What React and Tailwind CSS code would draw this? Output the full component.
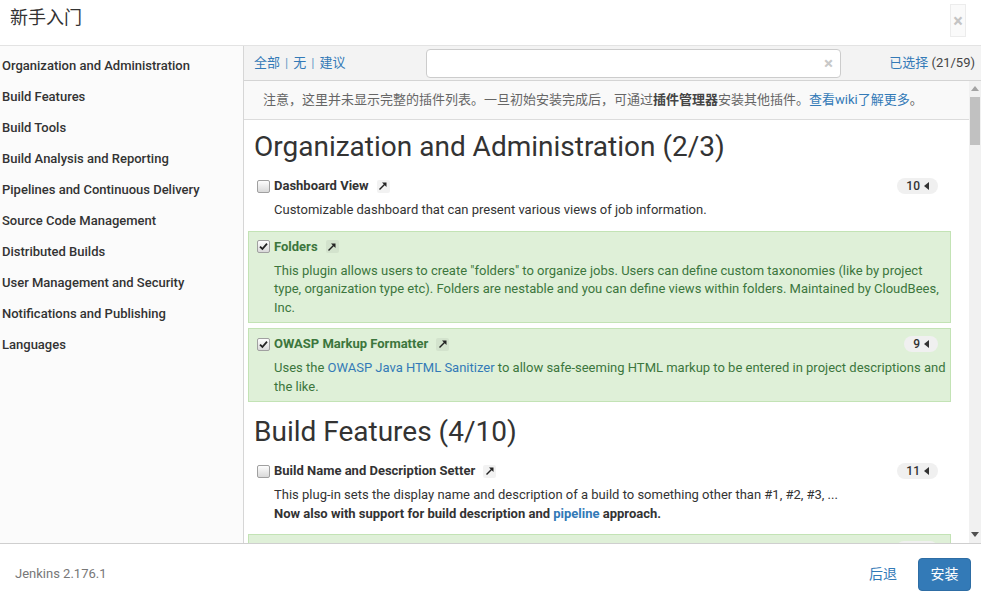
import React from "react";

const sections = [
  "Organization and Administration",
  "Build Features",
  "Build Tools",
  "Build Analysis and Reporting",
  "Pipelines and Continuous Delivery",
  "Source Code Management",
  "Distributed Builds",
  "User Management and Security",
  "Notifications and Publishing",
  "Languages",
];

function Check({ checked }) {
  return (
    <span className="inline-flex h-[13px] w-[13px] shrink-0 items-center justify-center rounded-[2px] border border-[#a0a0a0] bg-linear-to-b from-[#fdfdfd] to-[#d9d9d9]">
      {checked && (
        <svg width="9" height="9" viewBox="0 0 9 9">
          <path d="M1 4.6 L3.4 7 L8 1.6" fill="none" stroke="#222" strokeWidth="1.8" />
        </svg>
      )}
    </span>
  );
}

function Arrow() {
  return (
    <span className="ml-[8px] inline-flex h-[13px] w-[13px] items-center justify-center rounded-[2px] bg-black/5">
      <svg width="10" height="10" viewBox="0 0 10 10">
        <path d="M1.5 8.5 L7 3" stroke="#222" strokeWidth="1.5" />
        <path d="M4 1.5 L8.5 1.5 L8.5 6 Z" fill="#222" />
      </svg>
    </span>
  );
}

function Badge({ n }) {
  return (
    <span className="ml-auto mr-[4px] flex h-[16px] items-center gap-[4px] rounded-full bg-[#f0f0f0] px-[9px] text-[12px] font-medium text-[#333]">
      {n}
      <svg width="5" height="8" viewBox="0 0 5 8">
        <path d="M5 0 L0 4 L5 8 Z" fill="#333" />
      </svg>
    </span>
  );
}

function Plugin({ name, checked, count, children }) {
  return (
    <div
      className={`mb-[5px] ml-[4px] mr-[18px] border px-[8px] pb-[5px] pt-[6px] ${
        checked ? "border-[#c3e3b5] bg-[#dff0d8] text-[#3c763d]" : "border-transparent text-[#333]"
      }`}
    >
      <div className="flex h-[18px] items-center">
        <Check checked={checked} />
        <span className="ml-[4px] text-[13px] font-bold">{name}</span>
        <Arrow />
        {count && <Badge n={count} />}
      </div>
      <div className="mt-[6px] whitespace-nowrap pl-[17px] text-[13px] leading-[18.5px]">{children}</div>
    </div>
  );
}

function Heading({ children, extra }) {
  return (
    <h2 className={`mb-[7px] pl-[10px] text-[28px] leading-[33px] text-[#333] ${extra ? "mt-[13px]" : "mt-[10px]"}`}>
      {children}
    </h2>
  );
}

export default function App() {
  return (
    <div className="flex h-[604px] w-full flex-col overflow-hidden bg-white font-[Roboto,'Noto_Sans_CJK_SC',sans-serif] text-[#333]">
      {/* header */}
      <div className="flex h-[46px] shrink-0 items-start justify-between border-b border-[#e3e3e3]">
        <div className="pl-[10px] pt-[6px] text-[18px] leading-[24px] text-[#333]">新手入门</div>
        <button className="mr-[15px] mt-[4px] flex h-[33px] w-[16px] items-center justify-center border border-[#ececec] bg-[#fafafa] text-[18px] font-bold text-[#c4c4c4]">
          ×
        </button>
      </div>

      {/* body */}
      <div className="flex min-h-0 flex-1">
        <div className="w-[244px] shrink-0 border-r border-[#d6d6d6] bg-[#fbfbfb] pt-[4px]">
          {sections.map((s) => (
            <div key={s} className="h-[31px] pl-[2px] text-[13px] font-medium leading-[31px] text-[#333]">
              {s}
            </div>
          ))}
        </div>

        <div className="flex min-w-0 flex-1 flex-col">
          {/* toolbar */}
          <div className="flex h-[35px] shrink-0 items-center border-b border-[#d4d4d4] bg-[#f3f3f3]">
            <div className="flex w-[182px] items-center pl-[10px] text-[13px] text-[#337ab7]">
              <span>全部</span>
              <span className="mx-[5px] text-[#6a9bc8]">|</span>
              <span>无</span>
              <span className="mx-[5px] text-[#6a9bc8]">|</span>
              <span>建议</span>
            </div>
            <div className="flex h-[29px] w-[415px] items-center justify-end rounded-[4px] border border-[#cccccc] bg-white pr-[7px]">
              <span className="text-[17px] font-bold leading-none text-[#c8c8c8]">×</span>
            </div>
            <div className="ml-auto pr-[6px] text-[13px]">
              <span className="text-[#337ab7]">已选择</span>
              <span className="text-[#444]"> (21/59)</span>
            </div>
          </div>

          <div className="flex min-h-0 flex-1">
            <div className="min-w-0 flex-1 overflow-hidden">
              <div className="flex h-[39px] items-center border-b border-[#dcdcdc] bg-[#f9f9f9] pl-[19px] text-[13px] text-[#666]">
                注意，这里并未显示完整的插件列表。一旦初始安装完成后，可通过
                <b className="text-[#444]">插件管理器</b>
                安装其他插件。
                <span className="text-[#337ab7]">查看wiki了解更多</span>。
              </div>

              <Heading>Organization and Administration (2/3)</Heading>
              <Plugin name="Dashboard View" count="10">
                Customizable dashboard that can present various views of job information.
              </Plugin>
              <Plugin name="Folders" checked>
                This plugin allows users to create "folders" to organize jobs. Users can define custom taxonomies (like by project
                <br />
                type, organization type etc). Folders are nestable and you can define views within folders. Maintained by CloudBees,
                <br />
                Inc.
              </Plugin>
              <Plugin name="OWASP Markup Formatter" checked count="9">
                Uses the <span className="text-[#337ab7]">OWASP Java HTML Sanitizer</span> to allow safe-seeming HTML markup to be
                entered in project descriptions and
                <br />
                the like.
              </Plugin>

              <Heading extra>Build Features (4/10)</Heading>
              <Plugin name="Build Name and Description Setter" count="11">
                This plug-in sets the display name and description of a build to something other than #1, #2, #3, ...
                <br />
                <b>
                  Now also with support for build description and <span className="text-[#337ab7]">pipeline</span> approach.
                </b>
              </Plugin>
              {/* next plugin, only its top edge shows above the footer */}
              <div className="ml-[4px] mr-[18px] flex h-[40px] justify-end border border-[#c3e3b5] bg-[#dff0d8] pr-[12px] pt-[6px]">
                <span className="h-[16px] w-[42px] rounded-full bg-[#f0f0f0]" />
              </div>
            </div>

            {/* scrollbar */}
            <div className="relative w-[12px] shrink-0 bg-[#f1f1f1]">
              <svg className="absolute left-[2px] top-[5px]" width="8" height="5" viewBox="0 0 8 5">
                <path d="M0 5 L4 0 L8 5 Z" fill="#a3a3a3" />
              </svg>
              <div className="absolute left-[1px] top-[16px] h-[48px] w-[10px] bg-[#c1c1c1]" />
              <svg className="absolute bottom-[6px] left-[2px]" width="8" height="5" viewBox="0 0 8 5">
                <path d="M0 0 L8 0 L4 5 Z" fill="#505050" />
              </svg>
            </div>
          </div>
        </div>
      </div>

      {/* footer */}
      <div className="flex h-[61px] shrink-0 items-center border-t border-[#cfcfcf] bg-white">
        <div className="pl-[15px] text-[13px] text-[#777]">Jenkins 2.176.1</div>
        <div className="ml-auto flex items-center pr-[10px]">
          <span className="mr-[21px] text-[14px] text-[#337ab7]">后退</span>
          <button className="h-[33px] w-[53px] rounded-[4px] border border-[#2e6da4] bg-[#337ab7] text-[14px] text-white">
            安装
          </button>
        </div>
      </div>
    </div>
  );
}
